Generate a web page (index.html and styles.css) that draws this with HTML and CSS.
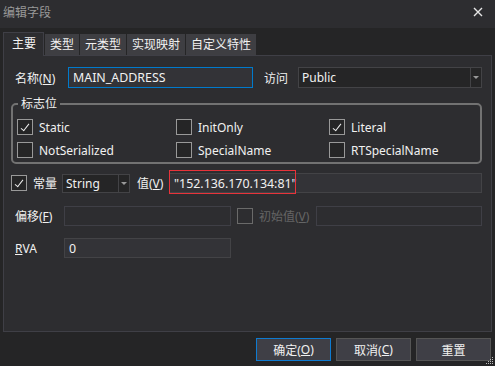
FILE: index.html
```html
<!DOCTYPE html>
<html lang="zh-CN">
<head>
  <meta charset="UTF-8">
  <title>编辑字段</title>
  <link rel="stylesheet" href="styles.css">
</head>
<body>
<div class="window">
  <div class="titlebar">
    <span class="title">编辑字段</span>
    <svg class="close" width="10" height="10" viewBox="0 0 10 10"><path d="M1 1 L9 9 M9 1 L1 9" stroke="#e6e6e6" stroke-width="1.4"/></svg>
  </div>

  <div class="tabs">
    <div class="tab active">主要</div>
    <div class="tab">类型</div>
    <div class="tab">元类型</div>
    <div class="tab">实现映射</div>
    <div class="tab">自定义特性</div>
  </div>

  <div class="panel">
    <div class="row">
      <label class="lbl w-name">名称(<u>N</u>)</label>
      <div class="input focus w-185">MAIN_ADDRESS</div>
      <label class="lbl w-access">访问</label>
      <div class="select grow"><span>Public</span><span class="drop"><i></i></span></div>
    </div>

    <div class="group">
      <div class="legend">标志位</div>
      <div class="flags">
        <div class="flag"><span class="cb on"></span>Static</div>
        <div class="flag"><span class="cb"></span>InitOnly</div>
        <div class="flag"><span class="cb on"></span>Literal</div>
        <div class="flag"><span class="cb"></span>NotSerialized</div>
        <div class="flag"><span class="cb"></span>SpecialName</div>
        <div class="flag"><span class="cb"></span>RTSpecialName</div>
      </div>
    </div>

    <div class="row const">
      <span class="cb on"></span>
      <label class="lbl w-const">常量</label>
      <div class="select w-68"><span>String</span><span class="drop"><i></i></span></div>
      <label class="lbl w-val">值(<u>V</u>)</label>
      <div class="input grow value">"152.136.170.134:81"<span class="mark"></span></div>
    </div>

    <div class="row offset">
      <label class="lbl w-off">偏移(<u>F</u>)</label>
      <div class="input off w-167"></div>
      <span class="cb dis"></span>
      <label class="lbl dim w-init">初始值(<u>V</u>)</label>
      <div class="input off grow"></div>
    </div>

    <div class="row rva">
      <label class="lbl w-off"><u>R</u>VA</label>
      <div class="input w-167">0</div>
    </div>
  </div>

  <div class="footer">
    <div class="btn primary">确定(<u>O</u>)</div>
    <div class="btn">取消(<u>C</u>)</div>
    <div class="btn">重置</div>
  </div>

  <svg class="grip" width="9" height="9" viewBox="0 0 9 9">
    <rect x="7" y="1" width="1" height="1" fill="#bbb"/>
    <rect x="5" y="3" width="1" height="1" fill="#bbb"/><rect x="7" y="3" width="1" height="1" fill="#bbb"/>
    <rect x="3" y="5" width="1" height="1" fill="#bbb"/><rect x="5" y="5" width="1" height="1" fill="#bbb"/><rect x="7" y="5" width="1" height="1" fill="#bbb"/>
    <rect x="1" y="7" width="1" height="1" fill="#bbb"/><rect x="3" y="7" width="1" height="1" fill="#bbb"/><rect x="5" y="7" width="1" height="1" fill="#bbb"/><rect x="7" y="7" width="1" height="1" fill="#bbb"/>
  </svg>
</div>
</body>
</html>
```

FILE: styles.css
```css
* { box-sizing: border-box; }
body {
  margin: 0;
  background: #252526;
  font-family: "Noto Sans", "Noto Sans CJK SC", sans-serif;
  font-size: 12px;
  color: #f1f1f1;
}
u { text-decoration: underline; text-underline-offset: 1px; }

.window {
  position: relative;
  width: 495px;
  height: 366px;
  background: #252526;
  overflow: hidden;
}

.titlebar {
  height: 28px;
  background: #2d2d30;
  display: flex;
  align-items: center;
  justify-content: space-between;
  padding: 0 12px 0 3px;
  color: #999;
}
.title { line-height: 16px; margin-top: -2px; }
.close { margin-top: -4px; }

.tabs {
  display: flex;
  align-items: flex-end;
  height: 27px;
  padding-left: 3px;
}
.tab {
  height: 21px;
  line-height: 21px;
  padding: 0 5px;
  margin-left: 1px;
  background: #3e3e42;
  color: #f1f1f1;
}
.tab.active {
  position: relative;
  z-index: 1;
  margin-left: 0;
  height: 24px;
  margin-bottom: -1px;
  padding: 0 7px 0 8px;
  line-height: 22px;
  background: #2d2d30;
  border: 1px solid #3f3f46;
  border-bottom: none;
}

.panel {
  margin: 0 3px;
  height: 277px;
  background: #2d2d30;
  border: 1px solid #3f3f46;
  padding: 11px 9px 0 11px;
}

.row {
  display: flex;
  align-items: center;
  height: 21px;
}
.lbl { flex: none; white-space: nowrap; }
.w-name { width: 53px; }
.w-access { width: 34px; margin-left: 11px; }
.w-const { width: 29px; margin-left: 6px; }
.w-val { width: 32px; margin-left: 7px; }
.w-off { width: 49px; }
.w-init { width: 57px; margin-left: 6px; }
.dim { color: #656565; }

.input {
  position: relative;
  height: 100%;
  background: #333337;
  border: 1px solid #434346;
  padding: 0 4px;
  display: flex;
  align-items: center;
  white-space: nowrap;
  font-size: 12.4px;
}
.input.focus { border-color: #007acc; }
.input.off { background: #2d2d30; border-color: #3f3f46; }
.w-185 { width: 185px; flex: none; }
.w-167 { width: 167px; flex: none; }
.w-68 { width: 68px; flex: none; }
.grow { flex: 1; }

.select {
  height: 100%;
  display: flex;
  background: #252526;
  border: 1px solid #434346;
}
.select span:first-child {
  flex: 1;
  padding-left: 3px;
  display: flex;
  align-items: center;
}
.drop {
  width: 11px;
  border-left: 1px solid #434346;
  display: flex;
  align-items: center;
  justify-content: center;
}
.drop i {
  width: 0;
  height: 0;
  border-left: 3px solid transparent;
  border-right: 3px solid transparent;
  border-top: 3px solid #999;
}

.group {
  margin: 15px 0 0 -4px;
  height: 61px;
  border: 2px solid #727272;
  border-radius: 5px;
}
.legend {
  display: table;
  margin: -9px 0 0 5px;
  padding: 0 3px;
  line-height: 16px;
  background: #2d2d30;
}
.flags {
  display: grid;
  grid-template-columns: 159px 153px 1fr;
  row-gap: 7px;
  padding: 7px 0 0 4px;
}
.flag {
  display: flex;
  align-items: center;
  height: 16px;
  gap: 6px;
}

.cb {
  flex: none;
  width: 16px;
  height: 16px;
  border: 1px solid #999;
  background: #252526;
  position: relative;
}
.cb.on::after {
  content: "";
  position: absolute;
  left: 5px;
  top: 2px;
  width: 3px;
  height: 8px;
  border-right: 1.6px solid #f1f1f1;
  border-bottom: 1.6px solid #f1f1f1;
  transform: rotate(38deg);
}
.cb.dis { border-color: #6a6a6a; background: #2d2d30; margin-left: 6px; }

.const { margin-top: 9px; height: 20px; }
.const > .cb { margin-left: -4px; }
.const .select { height: 19px; }
.value { padding-left: 4px; }
.mark {
  position: absolute;
  left: -1px;
  top: -4px;
  width: 127px;
  height: 24px;
  border: 1px solid #e8333a;
}

.offset { margin-top: 13px; height: 20px; }
.rva { margin-top: 12px; height: 20px; }

.footer {
  display: flex;
  justify-content: flex-end;
  gap: 5px;
  padding: 6px 4px 0 0;
}
.btn {
  width: 75px;
  height: 23px;
  background: #3f3f46;
  border: 1px solid #555;
  display: flex;
  align-items: center;
  justify-content: center;
}
.btn.primary { border-color: #0e7bd1; }

.grip {
  position: absolute;
  right: 1px;
  bottom: 1px;
}
```
